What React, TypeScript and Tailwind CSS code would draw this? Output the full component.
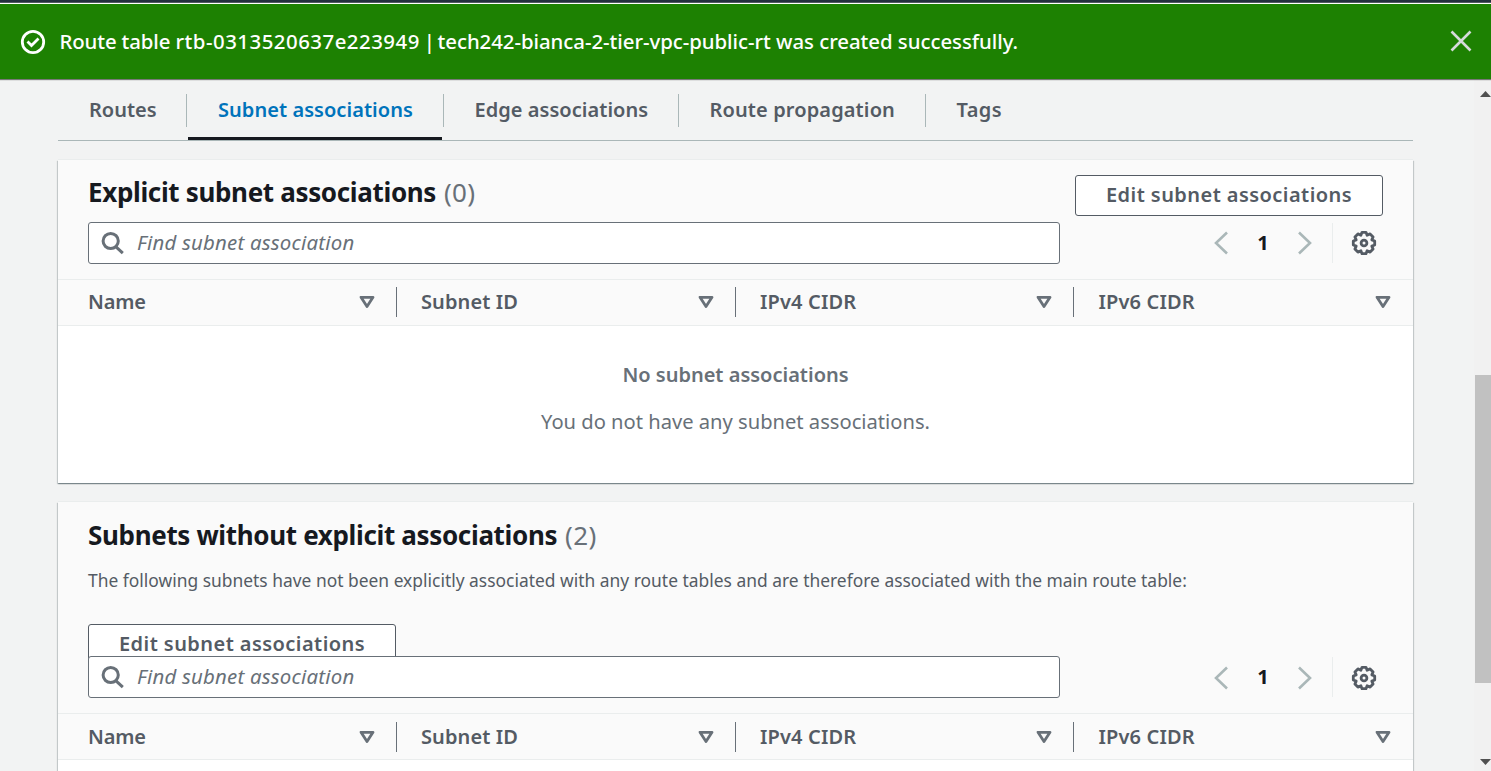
import type { ReactNode } from "react";

const columns = [
  { label: "Name", cell: "w-[339px] pl-[30px] pr-[22px]", text: "tracking-[-0.2px]" },
  { label: "Subnet ID", cell: "w-[339px] pl-[24px] pr-[22px]", text: "tracking-[0.1px]" },
  { label: "IPv4 CIDR", cell: "w-[338px] pl-[24px] pr-[22px]", text: "tracking-[0.15px]" },
  { label: "IPv6 CIDR", cell: "w-[339px] pl-[24.5px] pr-[22px]", text: "tracking-[0.15px]" },
];

const tabs = [
  { label: "Routes", cell: "w-[129px] pl-[31px]", text: "" },
  { label: "Subnet associations", cell: "w-[257px] pl-[31px]", text: "tracking-[0.05px]" },
  { label: "Edge associations", cell: "w-[235px] pl-[30.5px]", text: "tracking-[0.04px]" },
  { label: "Route propagation", cell: "w-[247px] pl-[30.5px]", text: "tracking-[0.12px]" },
  { label: "Tags", cell: "w-[110px] pl-[30.5px]", text: "tracking-[0.4px]" },
];

function Chevron({ flip }: { flip?: boolean }) {
  return (
    <svg width="16" height="24" viewBox="0 0 16 24" fill="none" stroke="#aab7b8" strokeWidth="2.6" className={flip ? "-scale-x-100" : ""}>
      <path d="M14 1.5 3 12l11 10.5" />
    </svg>
  );
}

function Gear() {
  return (
    <svg width="26" height="26" viewBox="-13 -13 26 26" fill="none" stroke="#545b64" strokeWidth="2.8" strokeLinejoin="round">
      <path d="M-2-10.7H2L3.1-7.8 6.1-9.1 9.1-6.1 7.8-3.1 10.7-2V2L7.8 3.1 9.1 6.1 6.1 9.1 3.1 7.8 2 10.7H-2L-3.1 7.8-6.1 9.1-9.1 6.1-7.8 3.1-10.7 2V-2L-7.8-3.1-9.1-6.1-6.1-9.1-3.1-7.8Z" />
      <circle r="2.9" />
    </svg>
  );
}

function EditButton() {
  return (
    <button className="h-[41px] w-[308px] shrink-0 rounded-[3px] border border-[#545b64] bg-white pb-px text-[20px] font-semibold leading-[38px] tracking-[0.44px] text-[#545b64]">
      Edit subnet associations
    </button>
  );
}

function SearchBar({ lower }: { lower?: boolean }) {
  return (
    <div className="relative flex h-[42px] items-center px-[30px]">
      <div className="flex h-[42px] w-[972px] items-center rounded-[3px] border border-[#687078] bg-white pl-[12px]">
        <svg width="24" height="24" viewBox="0 0 24 24" fill="none" stroke="#687078" strokeWidth="3">
          <circle cx="9.7" cy="10" r="7.6" />
          <path d="m15 15.8 6.8 6.4" />
        </svg>
        <span className="ml-[12px] pb-[2px] text-[20.4px] italic leading-[30px] tracking-[0.22px] text-[#687078]">
          Find subnet association
        </span>
      </div>
      <div className="flex items-center">
        <div className={`ml-[153px] flex items-center ${lower ? "pt-[2px]" : ""}`}>
          <Chevron />
          <span className={`w-[68px] text-center text-[20px] font-bold leading-[29px] text-[#16191f] ${lower ? "pb-[3px]" : "pb-px"}`}>1</span>
          <Chevron flip />
        </div>
        <div className="ml-[19px] h-[40px] w-px bg-[#eaeded]" />
        <div className={`ml-[18px] ${lower ? "pt-[2px]" : ""}`}>
          <Gear />
        </div>
      </div>
    </div>
  );
}

function TableHead({ lower }: { lower?: boolean }) {
  return (
    <div className={`flex h-[47px] border-y border-[#eaeded] bg-[#fafafa] ${lower ? "pt-px" : ""}`}>
      {columns.map((c, i) => (
        <div key={c.label} className={`relative flex h-[45px] shrink-0 items-center justify-between ${c.cell}`}>
          <span className={`pb-px text-[20px] font-semibold leading-[30px] text-[#545b64] ${c.text}`}>{c.label}</span>
          <svg width="16" height="14" viewBox="0 0 16 14" fill="none" stroke="#687078" strokeWidth="2.8" strokeLinejoin="round" className="mb-px">
            <path d="M2 2.3h12L8 11.6Z" />
          </svg>
          {i < 3 && <div className="absolute right-0 top-[7px] h-[30px] w-px bg-[#687078]" />}
        </div>
      ))}
    </div>
  );
}

function Panel({ className, children }: { className: string; children: ReactNode }) {
  return (
    <section className={`w-[1355px] bg-[#fafafa] shadow-[0_1px_1px_0_rgba(0,28,36,0.3),1px_1px_1px_0_rgba(0,28,36,0.15),-1px_1px_1px_0_rgba(0,28,36,0.15),0_-1px_0_0_#eaeded] ${className}`}>
      {children}
    </section>
  );
}

function Title({ text, count }: { text: string; count: number }) {
  return (
    <h2 className="text-[26px] font-bold leading-[36px] tracking-[-0.34px] text-[#16191f]">
      {text} <span className="ml-[1.5px] font-normal tracking-[0.3px] text-[#687078]">({count})</span>
    </h2>
  );
}

export default function App() {
  return (
    <div className="flex h-[771px] w-[1491px] flex-col overflow-hidden bg-[#f2f3f3] [font-family:'Noto_Sans',sans-serif]">
      <div className="h-[2px] shrink-0 bg-[#232f3e]" />
      <div className="h-px shrink-0 bg-[#545b64]" />
      <div className="h-px shrink-0 bg-white" />
      <header className="z-10 flex h-[75px] shrink-0 items-center bg-[#1d8102] pl-[20px] pr-[19px] text-white shadow-[0_1px_1px_0_rgba(0,0,0,0.5)]">
        <svg width="26" height="26" viewBox="0 0 26 26" fill="none" stroke="white" strokeWidth="2.8">
          <circle cx="13" cy="13" r="10.7" />
          <path d="m7.5 12.6 4 4 7-7" />
        </svg>
        <p className="ml-[13.5px] grow whitespace-nowrap pb-[2px] text-[20.4px] font-medium leading-[30px] tracking-[-0.05px]">
          <span className="tracking-[-0.14px]">Route table </span>
          <span className="tracking-[0.5px]">rtb-0313520637e223949</span>
          <span className="tracking-[-1.4px]"> | </span>
          tech242-bianca-2-tier-vpc-public-rt was created successfully.
        </p>
        <svg width="22" height="22" viewBox="0 0 22 22" fill="none" stroke="#d5dbdb" strokeWidth="2.6" className="mb-[2px]">
          <path d="m1.5 1.5 19 19m0-19-19 19" />
        </svg>
      </header>

      <div className="flex h-[692px]">
        <main className="flex h-full w-[1474px] flex-col pl-[58px]">
          <nav className="flex h-[62px] w-[1355px] shrink-0 border-b border-[#aab7b8]">
            {tabs.map((t, i) => (
              <div key={t.label} className={`relative flex h-[62px] shrink-0 pt-[16px] ${t.cell}`}>
                <span className={`whitespace-nowrap text-[20px] font-semibold leading-[30px] ${t.text} ${i === 1 ? "text-[#0073bb]" : "text-[#545b64]"}`}>
                  {t.label}
                </span>
                {i < 4 && <div className="absolute right-0 top-[15px] h-[33px] w-px bg-[#aab7b8]" />}
                {i === 1 && <div className="absolute bottom-px left-px right-[2px] h-[3px] bg-[#16191f]" />}
              </div>
            ))}
          </nav>

          <Panel className="mt-[19px] h-[323px] shrink-0">
            <div className="flex h-[62px] items-start justify-between px-[30px] pt-[15px]">
              <div className="-mt-px">
                <Title text="Explicit subnet associations" count={0} />
              </div>
              <EditButton />
            </div>
            <SearchBar />
            <div className="h-[15px]" />
            <TableHead />
            <div className="flex h-[157px] flex-col items-center bg-white pt-[34px] text-[#687078]">
              <p className="text-[20px] font-semibold leading-[30px]">No subnet associations</p>
              <p className="mt-[16px] text-[20.15px] leading-[30px]">You do not have any subnet associations.</p>
            </div>
          </Panel>

          <Panel className="mt-[19px] h-[300px] shrink-0">
            <div className="h-[154px] px-[30px] pt-[15px]">
              <Title text="Subnets without explicit associations" count={2} />
              <p className="mt-[15px] whitespace-nowrap text-[17.4px] leading-[24px] tracking-[0.01px] text-[#545b64]">
                The following subnets have not been explicitly associated with any route tables and are therefore associated with the main route table:
              </p>
              <div className="mt-[32px] h-[34px]">
                <EditButton />
              </div>
            </div>
            <SearchBar lower />
            <div className="h-[15px]" />
            <TableHead lower />
            <div className="h-[40px] bg-white" />
          </Panel>
        </main>

        <aside className="flex h-full w-[17px] flex-col bg-[#f1f1f1]">
          <div className="flex h-[18px] items-end justify-end overflow-hidden">
            <svg width="11" height="6" viewBox="0 0 11 6" className="shrink-0">
              <path d="M0 6 5.5 0 11 6Z" fill="#505050" />
            </svg>
          </div>
          <div className="ml-px mt-[278px] h-[308px] bg-[#c1c1c1]" />
          <div className="mt-[76px] flex justify-end">
            <svg width="11" height="6" viewBox="0 0 11 6">
              <path d="M0 0h11L5.5 6Z" fill="#505050" />
            </svg>
          </div>
        </aside>
      </div>
    </div>
  );
}
